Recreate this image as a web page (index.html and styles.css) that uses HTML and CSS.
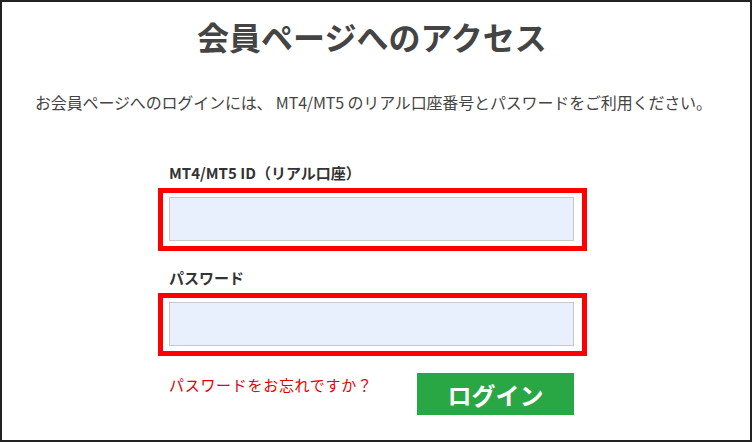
FILE: index.html
```html
<!DOCTYPE html>
<html lang="ja">
<head>
    <meta charset="UTF-8">
    <meta name="viewport" content="width=device-width, initial-scale=1.0">
    <title>会員ページへのアクセス</title>
    <link rel="stylesheet" href="styles.css">
</head>
<body>
    <div class="page">
        <h1 class="title">会員ページへのアクセス</h1>
        <p class="lead">お会員ページへのログインには、 MT4/MT5 のリアル口座番号とパスワードをご利用ください。</p>
        <form class="login">
            <label class="label" for="account">MT4/MT5 ID（リアル口座）</label>
            <div class="field">
                <input class="input" id="account" type="text">
            </div>
            <label class="label label-second" for="password">パスワード</label>
            <div class="field">
                <input class="input" id="password" type="password">
            </div>
            <div class="actions">
                <a class="forgot" href="#">パスワードをお忘れですか？</a>
                <button class="submit" type="button">ログイン</button>
            </div>
        </form>
    </div>
</body>
</html>
```

FILE: styles.css
```css
html, body {
    height: 100%;
}
* {
    margin: 0;
    padding: 0;
    box-sizing: border-box;
}
body {
    font-family: "Noto Sans CJK JP", "Noto Sans", sans-serif;
    color: #444;
    background: #fff;
}
.page {
    height: 442px;
    border: 2px solid #222;
    padding-top: 14px;
}
.title {
    font-size: 32px;
    line-height: 40px;
    font-weight: 700;
    text-align: center;
    color: #444;
    margin-right: 8px;
}
.lead {
    font-size: 16px;
    line-height: 24px;
    margin-top: 34px;
    padding-left: 33px;
    letter-spacing: -0.15px;
    color: #444;
}
.login {
    width: 429px;
    margin: 49px 0 0 156px;
}
.label {
    display: block;
    font-size: 15px;
    line-height: 20px;
    font-weight: 700;
    color: #333;
    padding-left: 11px;
    margin-bottom: 5px;
}
.label-second {
    margin-top: 17px;
}
.field {
    border: 5px solid #f00;
    padding: 4px 8px 5px 6px;
}
.input {
    display: block;
    width: 100%;
    height: 44px;
    border: 1px solid #c8c8c8;
    background: #e8f0fe;
    outline: none;
}
.actions {
    display: flex;
    justify-content: space-between;
    align-items: flex-start;
    margin-top: 17px;
    padding: 0 13px 0 11px;
}
.forgot {
    font-size: 15px;
    line-height: 22px;
    margin-top: 1px;
    letter-spacing: 0.7px;
    color: #e60000;
    text-decoration: none;
}
.submit {
    width: 157px;
    height: 42px;
    border: none;
    background: #29a745;
    color: #fff;
    font-family: inherit;
    font-size: 24px;
    font-weight: 700;
    cursor: pointer;
}
```
